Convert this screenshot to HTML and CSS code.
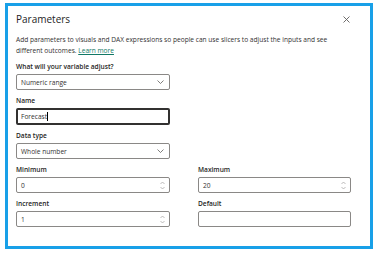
FILE: index.html
```html
<!DOCTYPE html>
<html lang="en">
<head>
    <meta charset="UTF-8">
    <meta name="viewport" content="width=device-width, initial-scale=1.0">
    <title>Parameters</title>
    <link rel="stylesheet" href="styles.css">
</head>
<body>
    <div class="dialog">
        <div class="dialog-header">
            <h1>Parameters</h1>
            <span class="close">
                <svg width="7" height="7" viewBox="0 0 7 7"><path d="M0.5 0.5 L6.5 6.5 M6.5 0.5 L0.5 6.5" stroke="#605e5c" stroke-width="0.9" fill="none"/></svg>
            </span>
        </div>

        <p class="intro">
            Add parameters to visuals and DAX expressions so people can use slicers to adjust the inputs and see<br>
            different outcomes. <a href="#" class="link">Learn more</a>
        </p>

        <div class="field half">
            <div class="label">What will your variable adjust?</div>
            <div class="control select">
                <span>Numeric range</span>
                <svg class="chevron" width="7" height="4" viewBox="0 0 7 4"><path d="M0.5 0.5 L3.5 3.5 L6.5 0.5" stroke="#605e5c" stroke-width="0.8" fill="none"/></svg>
            </div>
        </div>

        <div class="field half">
            <div class="label">Name</div>
            <div class="control focused">
                <span>Forecast</span><span class="caret"></span>
            </div>
        </div>

        <div class="field half">
            <div class="label">Data type</div>
            <div class="control select">
                <span>Whole number</span>
                <svg class="chevron" width="7" height="4" viewBox="0 0 7 4"><path d="M0.5 0.5 L3.5 3.5 L6.5 0.5" stroke="#605e5c" stroke-width="0.8" fill="none"/></svg>
            </div>
        </div>

        <div class="grid">
            <div class="field">
                <div class="label">Minimum</div>
                <div class="control select">
                    <span>0</span>
                    <svg class="spin" width="5" height="9" viewBox="0 0 5 9"><path d="M0.5 3 L2.5 1 L4.5 3 M0.5 6 L2.5 8 L4.5 6" stroke="#a19f9d" stroke-width="0.7" fill="none"/></svg>
                </div>
            </div>
            <div class="field">
                <div class="label">Maximum</div>
                <div class="control select">
                    <span>20</span>
                    <svg class="spin" width="5" height="9" viewBox="0 0 5 9"><path d="M0.5 3 L2.5 1 L4.5 3 M0.5 6 L2.5 8 L4.5 6" stroke="#a19f9d" stroke-width="0.7" fill="none"/></svg>
                </div>
            </div>
            <div class="field">
                <div class="label">Increment</div>
                <div class="control select">
                    <span>1</span>
                    <svg class="spin" width="5" height="9" viewBox="0 0 5 9"><path d="M0.5 3 L2.5 1 L4.5 3 M0.5 6 L2.5 8 L4.5 6" stroke="#a19f9d" stroke-width="0.7" fill="none"/></svg>
                </div>
            </div>
            <div class="field">
                <div class="label">Default</div>
                <div class="control"></div>
            </div>
        </div>
    </div>
</body>
</html>
```

FILE: styles.css
```css
body {
    margin: 0;
    background-color: white;
    font-family: 'Open Sans', 'Noto Sans', sans-serif;
    color: #323130;
}
.dialog {
    margin: 3px 3px 0 5px;
    border: 3px solid #18a0e8;
    padding: 6px 19px 0 8px;
    box-sizing: border-box;
    height: 246px;
}
.dialog-header {
    display: flex;
    justify-content: space-between;
    align-items: center;
    height: 14px;
}
h1 {
    margin: 0;
    font-size: 10px;
    font-weight: 400;
    color: #252423;
    line-height: 14px;
}
.close {
    display: flex;
    margin-right: 1px;
}
.intro {
    margin: 8px 0 0 0;
    font-size: 6.6px;
    line-height: 11px;
    color: #323130;
}
.link {
    color: #117865;
}
.field {
    margin-top: 6px;
}
.field.half {
    width: 154px;
}
.label {
    font-size: 6.6px;
    font-weight: 600;
    line-height: 10px;
    margin-bottom: 2px;
    color: #252423;
}
.control {
    height: 16px;
    box-sizing: border-box;
    border: 1px solid #8a8886;
    border-radius: 2px;
    display: flex;
    align-items: center;
    padding: 0 4px;
    font-size: 6.6px;
    color: #323130;
}
.control.select {
    justify-content: space-between;
}
.control.focused {
    height: 17px;
    border: 2px solid #323130;
    padding: 0 3px;
}
.caret {
    display: inline-block;
    width: 1px;
    height: 9px;
    background-color: #000;
}
.chevron {
    margin-right: 1px;
}
.grid {
    display: grid;
    grid-template-columns: 154px 153px;
    column-gap: 28px;
}
```
